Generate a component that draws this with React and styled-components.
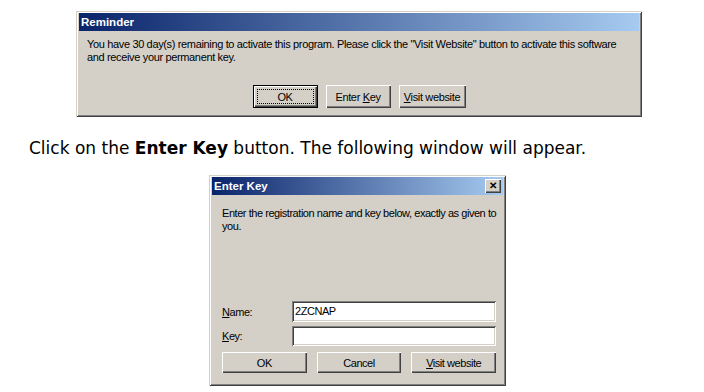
import React from "react";
import styled, { createGlobalStyle } from "styled-components";

const GlobalStyle = createGlobalStyle`
  html, body {
    margin: 0;
    padding: 0;
    background: #ffffff;
  }
  body {
    font-family: "Liberation Sans", Arial, sans-serif;
  }
`;

const Page = styled.div`
  width: 704px;
  height: 392px;
  overflow: hidden;
  padding-top: 11px;
  box-sizing: border-box;
`;

const Window = styled.div`
  box-sizing: border-box;
  margin-left: ${(p) => p.left}px;
  width: ${(p) => p.width}px;
  height: ${(p) => p.height}px;
  background: #d4d0c8;
  padding: 2px 3px 3px 3px;
  display: flex;
  flex-direction: column;
  box-shadow: inset 1px 1px 0 #d4d0c8, inset -1px -1px 0 #404040,
    inset 2px 2px 0 #ffffff, inset -2px -2px 0 #808080;
`;

const TitleBar = styled.div`
  height: 18px;
  display: flex;
  align-items: center;
  justify-content: space-between;
  padding: 0 2px 0 2px;
  background: linear-gradient(to right, #0a246a, #a6caf0);
  color: #ffffff;
  font-weight: bold;
  font-size: 11.5px;
`;

const CloseButton = styled.div`
  width: 16px;
  height: 14px;
  background: #d4d0c8;
  color: #000;
  font-size: 10px;
  font-weight: bold;
  line-height: 14px;
  text-align: center;
  box-sizing: border-box;
  box-shadow: inset 1px 1px 0 #ffffff, inset -1px -1px 0 #404040,
    inset -2px -2px 0 #808080;
`;

const Body = styled.div`
  flex: 1;
  display: flex;
  flex-direction: column;
  padding: ${(p) => p.pad};
  font-size: 11px;
  letter-spacing: ${(p) => p.spacing || 0}px;
  color: #000;
`;

const Message = styled.p`
  margin: 0;
  line-height: 13px;
  white-space: nowrap;
`;

const ButtonRow = styled.div`
  display: flex;
  justify-content: ${(p) => p.justify || "center"};
  gap: ${(p) => p.gap}px;
  margin-top: auto;
`;

const Button = styled.div`
  box-sizing: border-box;
  width: ${(p) => p.width}px;
  height: ${(p) => p.height}px;
  display: flex;
  align-items: center;
  justify-content: center;
  font-size: 11px;
  color: #000;
  position: relative;
  box-shadow: ${(p) =>
    p.primary
      ? "inset 0 0 0 1px #000, inset 2px 2px 0 #ffffff, inset -2px -2px 0 #404040, inset -3px -3px 0 #808080"
      : "inset 1px 1px 0 #ffffff, inset -1px -1px 0 #404040, inset -2px -2px 0 #808080"};
`;

const Focus = styled.span`
  position: absolute;
  inset: 4px;
  border: 1px dotted #000;
`;

const U = styled.span`
  text-decoration: underline;
`;

const Instruction = styled.p`
  margin: 21px 0 0 29px;
  font-family: "DejaVu Sans", Verdana, sans-serif;
  font-size: 17px;
  line-height: 20px;
  color: #000;
`;

const Spacer = styled.div`
  height: ${(p) => p.h}px;
`;

const Fields = styled.div`
  margin-top: auto;
`;

const Field = styled.div`
  display: grid;
  grid-template-columns: 70px 1fr;
  align-items: center;
  height: ${(p) => p.height}px;
  margin-bottom: ${(p) => p.gap}px;
`;

const Input = styled.div`
  box-sizing: border-box;
  height: 100%;
  background: #ffffff;
  padding: 2px 3px;
  font-size: 11px;
  line-height: 16px;
  box-shadow: inset 1px 1px 0 #808080, inset -1px -1px 0 #ffffff,
    inset 2px 2px 0 #404040, inset -2px -2px 0 #d4d0c8;
`;

export default function App() {
  return (
    <Page>
      <GlobalStyle />
      <Window left={76} width={566} height={106}>
        <TitleBar>Reminder</TitleBar>
        <Body pad="7px 8px 6px 8px" spacing={-0.35}>
          <Message>
            You have 30 day(s) remaining to activate this program. Please click
            the "Visit Website" button to activate this software
            <br />
            and receive your permanent key.
          </Message>
          <ButtonRow gap={8}>
            <Button primary width={65} height={23}>
              <Focus />
              OK
            </Button>
            <Button width={65} height={23}>
              <span>
                Enter <U>K</U>ey
              </span>
            </Button>
            <Button width={67} height={23}>
              <span>
                <U>V</U>isit website
              </span>
            </Button>
          </ButtonRow>
        </Body>
      </Window>
      <Instruction>
        Click on the <b>Enter Key</b> button. The following window will appear.
      </Instruction>
      <Spacer h={17} />
      <Window left={209} width={297} height={211}>
        <TitleBar>
          Enter Key
          <CloseButton>✕</CloseButton>
        </TitleBar>
        <Body pad="12px 7px 10px 10px" spacing={-0.45}>
          <Message>
            Enter the registration name and key below, exactly as given to
            <br />
            you.
          </Message>
          <Fields>
            <Field height={21} gap={4}>
              <span>
                <U>N</U>ame:
              </span>
              <Input>2ZCNAP</Input>
            </Field>
            <Field height={20} gap={6}>
              <span>
                <U>K</U>ey:
              </span>
              <Input />
            </Field>
            <ButtonRow justify="space-between" gap={10}>
              <Button width={85} height={21}>OK</Button>
              <Button width={85} height={21}>Cancel</Button>
              <Button width={85} height={21}>
                <span>
                  <U>V</U>isit website
                </span>
              </Button>
            </ButtonRow>
          </Fields>
        </Body>
      </Window>
    </Page>
  );
}
